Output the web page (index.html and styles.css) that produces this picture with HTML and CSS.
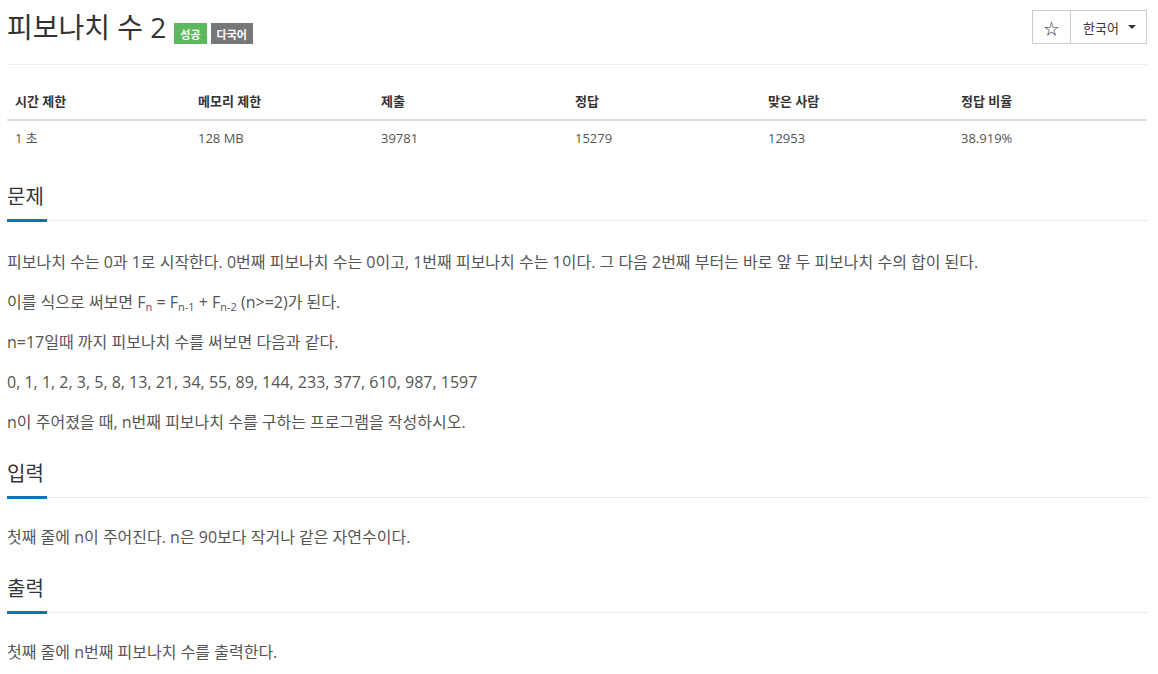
FILE: index.html
```html
<!DOCTYPE html>
<html lang="ko">
<head>
<meta charset="utf-8">
<title>피보나치 수 2</title>
<link rel="stylesheet" href="styles.css">
</head>
<body>
<div class="page">
  <div class="header">
    <div class="title-wrap">
      <span class="title">피보나치 수 2</span>
      <span class="label label-green">성공</span>
      <span class="label label-gray">다국어</span>
    </div>
    <div class="btn-group">
      <span class="btn btn-star">☆</span>
      <span class="btn btn-lang">한국어<span class="caret"></span></span>
    </div>
  </div>

  <table class="info">
    <colgroup>
      <col class="c1"><col class="c2"><col class="c3"><col class="c4"><col class="c5"><col class="c6">
    </colgroup>
    <thead>
      <tr><th>시간 제한</th><th>메모리 제한</th><th>제출</th><th>정답</th><th>맞은 사람</th><th>정답 비율</th></tr>
    </thead>
    <tbody>
      <tr><td>1 초</td><td>128 MB</td><td>39781</td><td>15279</td><td>12953</td><td>38.919%</td></tr>
    </tbody>
  </table>

  <section class="section">
    <h2 class="headline">문제</h2>
    <div class="rule"><span class="bar"></span><span class="dots"></span></div>
    <div class="text">
      <p>피보나치 수는 0과 1로 시작한다. 0번째 피보나치 수는 0이고, 1번째 피보나치 수는 1이다. 그 다음 2번째 부터는 바로 앞 두 피보나치 수의 합이 된다.</p>
      <p>이를 식으로 써보면 F<sub>n</sub> = F<sub>n-1</sub> + F<sub>n-2</sub> (n&gt;=2)가 된다.</p>
      <p>n=17일때 까지 피보나치 수를 써보면 다음과 같다.</p>
      <p>0, 1, 1, 2, 3, 5, 8, 13, 21, 34, 55, 89, 144, 233, 377, 610, 987, 1597</p>
      <p>n이 주어졌을 때, n번째 피보나치 수를 구하는 프로그램을 작성하시오.</p>
    </div>
  </section>

  <section class="section">
    <h2 class="headline">입력</h2>
    <div class="rule"><span class="bar"></span><span class="dots"></span></div>
    <div class="text">
      <p>첫째 줄에 n이 주어진다. n은 90보다 작거나 같은 자연수이다.</p>
    </div>
  </section>

  <section class="section">
    <h2 class="headline">출력</h2>
    <div class="rule"><span class="bar"></span><span class="dots"></span></div>
    <div class="text">
      <p>첫째 줄에 n번째 피보나치 수를 출력한다.</p>
    </div>
  </section>
</div>
</body>
</html>
```

FILE: styles.css
```css
* { box-sizing: border-box; }
html, body { margin: 0; padding: 0; background: #fff; }
body {
  font-family: "Open Sans", "Noto Sans CJK KR", sans-serif;
  color: #555;
  font-size: 13px;
}
.page {
  width: 1140px;
  margin-left: 7px;
}
.header {
  display: flex;
  justify-content: space-between;
  align-items: flex-start;
  padding-top: 10px;
  height: 65px;
  border-bottom: 1px solid #eee;
}
.title-wrap {
  display: flex;
  align-items: flex-end;
  gap: 4px;
}
.title {
  font-size: 28px;
  line-height: 34px;
  color: #333;
  margin-right: 4px;
}
.label {
  display: inline-flex;
  align-items: center;
  height: 21px;
  padding: 0 6px;
  font-size: 11px;
  font-weight: 700;
  color: #fff;
}
.label-green { background: #5cb85c; }
.label-gray { background: #777; }
.btn-group {
  display: flex;
}
.btn {
  display: inline-flex;
  align-items: center;
  justify-content: center;
  height: 34px;
  border: 1px solid #ccc;
  color: #333;
  font-size: 13px;
  background: #fff;
}
.btn-star {
  width: 39px;
  font-size: 15px;
}
.btn-lang {
  width: 77px;
  margin-left: -1px;
  gap: 9px;
  padding-left: 2px;
}
.caret {
  width: 0;
  height: 0;
  border-left: 4px solid transparent;
  border-right: 4px solid transparent;
  border-top: 4px solid #333;
}
.info {
  width: 100%;
  border-collapse: collapse;
  margin-top: 19px;
  table-layout: fixed;
}
.c1, .c2 { width: 183px; }
.c3, .c6 { width: 194px; }
.c4, .c5 { width: 193px; }
.info th, .info td {
  text-align: left;
  padding: 8px;
  line-height: 19px;
  font-size: 13px;
}
.info th {
  color: #333;
  font-weight: 700;
  border-bottom: 2px solid #ddd;
}
.info td {
  color: #555;
}
.section {
  margin-top: 27px;
}
.section + .section {
  margin-top: 26px;
}
.headline {
  margin: 0;
  font-size: 20px;
  font-weight: 400;
  line-height: 28px;
  color: #333;
  padding-bottom: 8px;
}
.rule {
  display: flex;
  align-items: flex-start;
}
.bar {
  width: 40px;
  height: 3px;
  background: #0076c0;
}
.dots {
  flex: 1;
  border-top: 1px dotted #c8d8e8;
  margin-top: 1px;
}
.text {
  padding-top: 28px;
}
.section + .section .text {
  padding-top: 26px;
}
.text p {
  margin: 0 0 16px 0;
  font-size: 16px;
  line-height: 24px;
  color: #555;
}
.text sub {
  font-size: 11px;
  line-height: 0;
  vertical-align: -3px;
}
```
